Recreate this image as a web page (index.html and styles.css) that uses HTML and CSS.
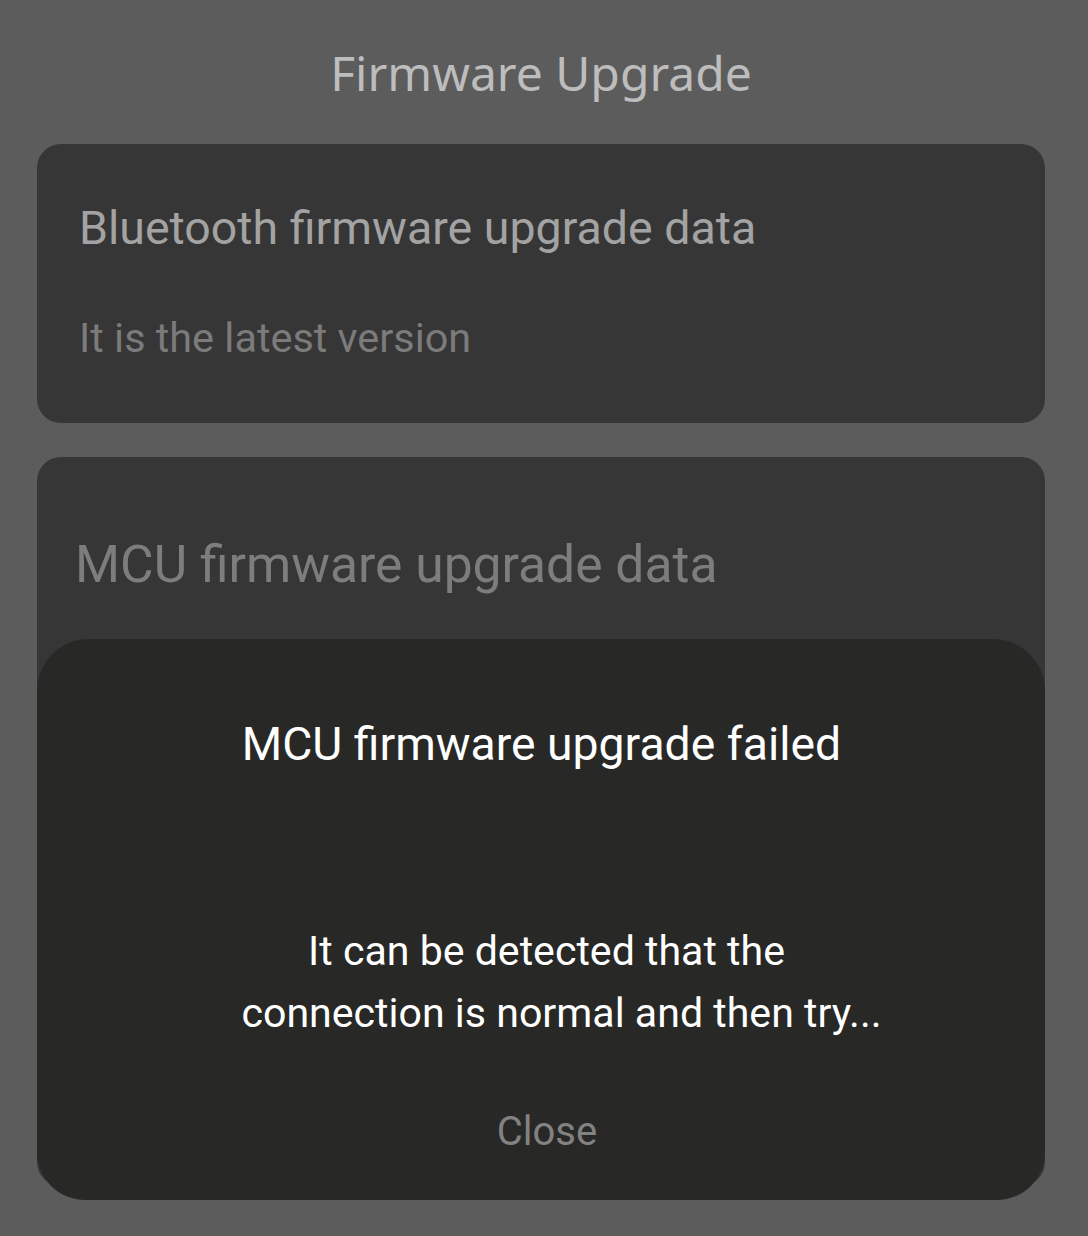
FILE: index.html
```html
<!DOCTYPE html>
<html>
<head>
<meta charset="utf-8">
<link rel="stylesheet" href="styles.css">
</head>
<body>
<div class="page">
  <h1 class="title">Firmware Upgrade</h1>
  <section class="card card-bt">
    <div class="card-name">Bluetooth firmware upgrade data</div>
    <div class="card-status">It is the latest version</div>
  </section>
  <section class="card card-mcu">
    <div class="card-name mcu-name">MCU firmware upgrade data</div>
  </section>
  <div class="dialog">
    <div class="dialog-title">MCU firmware upgrade failed</div>
    <div class="dialog-msg"><span class="l1">It can be detected that the</span><span class="l2">connection is normal and then try...</span></div>
    <div class="dialog-btn">Close</div>
  </div>
</div>
</body>
</html>
```
FILE: styles.css
```css
html, body {
  margin: 0;
  padding: 0;
  background: #5c5c5c;
}
body {
  font-family: Roboto, "Liberation Sans", sans-serif;
  width: 1088px;
  height: 1236px;
  overflow: hidden;
}
.page {
  position: relative;
  padding: 0 43px 0 37px;
  display: flex;
  flex-direction: column;
}
.title {
  margin: 0;
  height: 144px;
  padding-top: 41px;
  box-sizing: border-box;
  text-align: center;
  font-family: "Noto Sans", "Open Sans", sans-serif;
  font-weight: 400;
  font-size: 48px;
  line-height: 64px;
  color: #bdbdbd;
}
.card {
  background: #363636;
  border-radius: 24px;
  box-sizing: border-box;
}
.card-bt {
  height: 279px;
  padding: 56px 42px 0;
}
.card-name {
  font-size: 46.5px;
  line-height: 56px;
  color: #a3a3a3;
}
.card-status {
  margin-top: 57px;
  font-size: 41.4px;
  line-height: 50px;
  color: #7b7b7b;
}
.card-mcu {
  margin-top: 34px;
  height: 729px;
  padding: 76px 38px 0;
}
.mcu-name {
  font-size: 51.6px;
  line-height: 64px;
  color: #7d7d7d;
}
.dialog {
  position: absolute;
  left: 37px;
  top: 639px;
  width: 1008px;
  height: 561px;
  background: #282826;
  border-radius: 52px 52px 48px 48px;
  display: flex;
  flex-direction: column;
  align-items: center;
  color: #ffffff;
}
.dialog-title {
  margin-top: 77px;
  font-size: 46.3px;
  line-height: 56px;
  margin-left: 1px;
}
.dialog-msg {
  margin-top: 148px;
  font-size: 41.1px;
  line-height: 62px;
  display: flex;
  flex-direction: column;
  align-items: center;
}
.l1 { margin-left: 11px; }
.l2 { margin-left: 41px; }
.dialog-btn {
  margin-top: 58px;
  font-size: 40px;
  line-height: 60px;
  color: #828282;
  margin-left: 12px;
}
```
